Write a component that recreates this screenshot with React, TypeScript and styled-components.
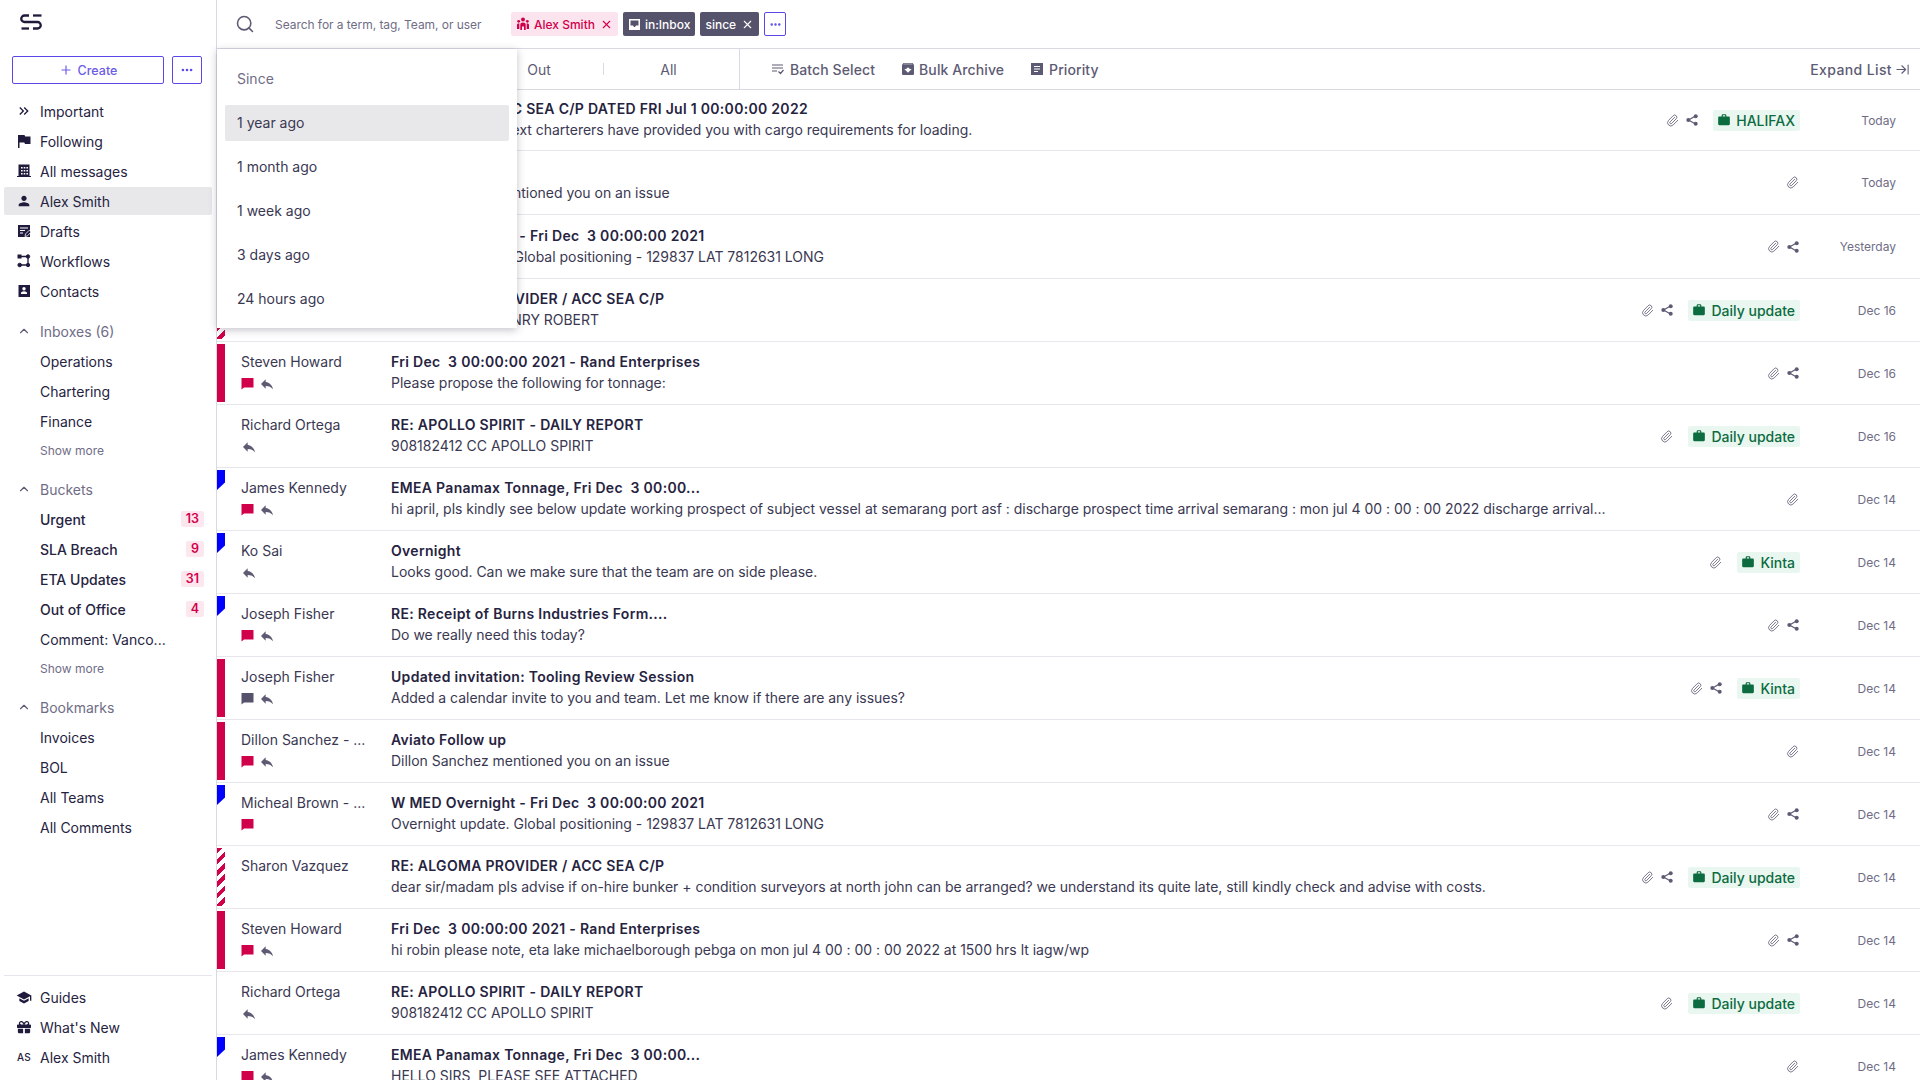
import React from "react";
import styled, { createGlobalStyle } from "styled-components";
import { Search, X, Plus, MoreHorizontal, ChevronUp, Paperclip, ArrowRightToLine } from "lucide-react";
import { MdKeyboardDoubleArrowRight, MdPerson, MdSchool, MdReply, MdWork, MdArchive } from "react-icons/md";
import { FaGift } from "react-icons/fa";

const INK = "#26233f";
const GREY = "#5d5b74";
const CRIMSON = "#d1004b";

const Global = createGlobalStyle`
  html, body { margin: 0; padding: 0; height: 100%; background: #fff; overflow: hidden; }
  body { font-family: Inter, "Liberation Sans", sans-serif; color: ${INK}; font-size: 14px; }
  * { box-sizing: border-box; }
`;

const Shell = styled.div`
  display: flex;
  width: 1920px;
  height: 1080px;
  overflow: hidden;
`;

const Sidebar = styled.aside`
  width: 217px;
  flex: none;
  display: flex;
  flex-direction: column;
  border-right: 1px solid #d9d9e4;
`;

const LogoBar = styled.div`
  height: 56px;
  padding: 13px 0 0 20px;
  flex: none;
`;

const CreateRow = styled.div`
  display: flex;
  gap: 8px;
  padding: 0 14px 0 12px;
  height: 28px;
  flex: none;
`;

const CreateButton = styled.button`
  flex: 1;
  display: flex;
  align-items: center;
  justify-content: center;
  gap: 5px;
  border: 1px solid #5a49e8;
  border-radius: 2px;
  background: #fff;
  color: #6c5ce7;
  font: 500 12.5px Inter, sans-serif;
  padding: 0;
`;

const MoreButton = styled.button<{ $w?: number }>`
  width: ${(p) => p.$w ?? 30}px;
  flex: none;
  display: flex;
  align-items: center;
  justify-content: center;
  border: 1px solid #5a49e8;
  border-radius: 2px;
  background: #fff;
  color: #5a49e8;
  padding: 0;
`;

const NavGroup = styled.nav<{ $top?: number }>`
  display: flex;
  flex-direction: column;
  gap: 2px;
  padding: 0 4px;
  margin-top: ${(p) => p.$top ?? 12}px;
  flex: none;
`;

const NavItem = styled.div<{ $active?: boolean; $strong?: boolean; $muted?: boolean }>`
  height: 28px;
  display: flex;
  align-items: center;
  gap: 8px;
  padding: 0 8px 0 12px;
  border-radius: 2px;
  background: ${(p) => (p.$active ? "#e8e8eb" : "transparent")};
  color: ${(p) => (p.$muted ? "#6f6d86" : INK)};
  font-size: 14px;
  font-weight: ${(p) => (p.$strong ? 500 : 400)};
  white-space: nowrap;
`;

const NavIcon = styled.span`
  width: 16px;
  height: 16px;
  flex: none;
  display: flex;
  align-items: center;
  justify-content: center;
  color: #1f1b3d;
`;

const Initials = styled.span`
  font-size: 10px;
  font-weight: 500;
  letter-spacing: 0.2px;
  color: #1f1b3d;
`;

const NavLabel = styled.span`
  flex: 1;
`;

const Count = styled.span`
  height: 16px;
  padding: 0 5px;
  border-radius: 2px;
  background: #fce7ef;
  color: ${CRIMSON};
  font-size: 12.5px;
  font-weight: 600;
  line-height: 16px;
`;

const ShowMore = styled.div`
  height: 26px;
  display: flex;
  align-items: center;
  padding-left: 36px;
  color: #6f6d86;
  font-size: 12px;
`;

const Footer = styled.div`
  margin-top: auto;
  margin-left: 4px;
  margin-right: 4px;
  padding-top: 7px;
  padding-bottom: 9px;
  border-top: 1px solid #e6e6ec;
  display: flex;
  flex-direction: column;
  gap: 2px;
  flex: none;
`;

const Main = styled.main`
  position: relative;
  flex: 1;
  min-width: 0;
  display: flex;
  flex-direction: column;
`;

const TopBar = styled.header`
  height: 49px;
  flex: none;
  display: flex;
  align-items: center;
  padding-left: 18px;
  border-bottom: 1px solid #d9d9e4;
`;

const Placeholder = styled.span`
  width: 236px;
  margin-left: 20px;
  flex: none;
  color: #6f6d86;
  font-size: 12px;
  letter-spacing: -0.05px;
  white-space: nowrap;
`;

const Chips = styled.div`
  display: flex;
  align-items: stretch;
  gap: 5px;
  height: 24px;
`;

const Chip = styled.span<{ $tone: "pink" | "slate" }>`
  height: 24px;
  display: flex;
  align-items: center;
  gap: 4px;
  padding: 0 5px;
  border-radius: 2px;
  font-size: 12px;
  font-weight: 500;
  background: ${(p) => (p.$tone === "pink" ? "#fce4ee" : "#55526b")};
  color: ${(p) => (p.$tone === "pink" ? CRIMSON : "#fff")};
`;

const ChipClose = styled(X)`
  margin-left: 1px;
`;

const Toolbar = styled.div`
  height: 41px;
  flex: none;
  display: flex;
  align-items: stretch;
  border-bottom: 1px solid #d9d9e4;
  color: ${GREY};
`;

const Tabs = styled.div`
  width: 523px;
  flex: none;
  display: flex;
  align-items: center;
  border-right: 1px solid #d9d9e4;
`;

const Tab = styled.div<{ $sep?: boolean }>`
  width: 129px;
  height: 12px;
  flex: none;
  display: flex;
  align-items: center;
  justify-content: center;
  font-size: 14px;
  border-right: ${(p) => (p.$sep ? "1px solid #d9d9e4" : "none")};
`;

const Actions = styled.div`
  flex: 1;
  display: flex;
  align-items: center;
  gap: 26px;
  padding: 0 10px 0 31px;
`;

const Action = styled.div<{ $gap?: number }>`
  display: flex;
  align-items: center;
  gap: ${(p) => p.$gap ?? 6}px;
  font-size: 14px;
  font-weight: 500;
  letter-spacing: 0.1px;
  white-space: nowrap;
`;

const ArchiveAction = styled(Action)`
  margin-left: -1px;
  margin-right: 1px;
`;

const ExpandAction = styled(Action)`
  margin-left: auto;
  letter-spacing: 0.38px;
`;

const List = styled.div`
  flex: 1;
  overflow: hidden;
`;

const Row = styled.div<{ $h: number }>`
  height: ${(p) => p.$h}px;
  display: flex;
  align-items: center;
  padding-right: 24px;
  border-bottom: 1px solid #e6e6ec;
`;

const FlagSlot = styled.div`
  width: 8px;
  flex: none;
  align-self: stretch;
  padding: 2px 0;
  display: flex;
`;

const FlagMark = styled.div<{ $kind: "red" | "blue" | "stripe" | "none" }>`
  width: 8px;
  height: ${(p) => (p.$kind === "blue" ? "20px" : "100%")};
  clip-path: ${(p) => (p.$kind === "blue" ? "polygon(0 0, 100% 0, 100% 62%, 0 100%)" : "none")};
  background: ${(p) =>
    p.$kind === "red"
      ? CRIMSON
      : p.$kind === "blue"
      ? "#0000ff"
      : p.$kind === "stripe"
      ? `repeating-linear-gradient(135deg, ${CRIMSON} 0 4px, #fff 4px 8px)`
      : "transparent"};
`;

const SenderCol = styled.div`
  width: 150px;
  margin-left: 16px;
  margin-bottom: 2px;
  flex: none;
  display: flex;
  flex-direction: column;
`;

const Line = styled.div`
  height: 21px;
  line-height: 21px;
  font-size: 14px;
  white-space: pre;
`;

const Sender = styled(Line)`
  color: #3a3852;
`;

const Marks = styled.div`
  height: 21px;
  padding-top: 2px;
  display: flex;
  align-items: center;
  gap: 5px;
  color: ${GREY};
`;

const MsgCol = styled.div`
  flex: 1;
  min-width: 0;
  margin-bottom: 2px;
  display: flex;
  flex-direction: column;
`;

const Subject = styled(Line)`
  font-weight: 600;
  letter-spacing: 0.3px;
  color: ${INK};
`;

const Preview = styled(Line)`
  letter-spacing: -0.02px;
  color: #3a3852;
`;

const RowIcons = styled.div`
  display: flex;
  align-items: center;
  gap: 7px;
  margin-right: 1px;
  flex: none;
  color: ${GREY};
`;

const Team = styled.span`
  height: 21px;
  margin-left: 14px;
  padding: 0 5px 0 4px;
  display: flex;
  align-items: center;
  gap: 5px;
  border-radius: 2px;
  background: #e9f7f0;
  color: #0c6b3f;
  font-size: 14px;
  font-weight: 500;
  flex: none;
`;

const When = styled.span`
  width: 96px;
  flex: none;
  text-align: right;
  font-size: 12px;
  color: #6f6d86;
`;

const Menu = styled.div`
  position: absolute;
  top: 49px;
  left: 0;
  width: 300px;
  height: 279px;
  padding: 8px 8px 0;
  background: #fff;
  box-shadow: 0 2px 8px rgba(40, 38, 70, 0.28);
`;

const MenuTitle = styled.div`
  height: 48px;
  padding: 0 0 5px 12px;
  display: flex;
  align-items: center;
  color: #6f6d86;
  font-size: 14px;
`;

const MenuItem = styled.div<{ $active?: boolean }>`
  height: 36px;
  margin-bottom: 8px;
  padding: 0 0 1px 12px;
  display: flex;
  align-items: center;
  border-radius: 2px;
  font-size: 14px;
  color: #3a3852;
  background: ${(p) => (p.$active ? "#e8e8eb" : "transparent")};
`;

const Logo = () => (
  <svg width="23" height="18" viewBox="0 0 23 18" fill="none" stroke="#1f1b3d" strokeWidth="2.3">
    <path d="M9 2.500H4.500a3.200 3.200 0 0 0 0 6.500h13a3.200 3.200 0 0 1 0 6.500H13" />
    <path d="M13 2.500h8.500" />
    <path d="M1.500 15.500H9" />
  </svg>
);

const FlagIcon = () => (
  <svg width="14" height="14" viewBox="0 0 14 14" fill="currentColor">
    <path d="M1 1h6.500l.7 1.500H13.500v7.500H8l-.7-1.500H2.500V14H1z" />
  </svg>
);

const Building = () => (
  <svg width="16" height="16" viewBox="0 0 16 16" fill="currentColor">
    <path fillRule="evenodd" d="M2.500 1.500h11V13H15v1H1v-1h1.500zM5 4v1.600h1.600V4zm2.700 0v1.600h1.600V4zm2.700 0v1.600H12V4zM5 7v1.600h1.600V7zm2.700 0v1.600h1.600V7zm2.700 0v1.600H12V7zM5 10v1.600h1.600V10zm2.700 0v1.600h1.600V10zm2.700 0v1.600H12V10z" />
  </svg>
);

const Draft = () => (
  <svg width="14" height="14" viewBox="0 0 14 14" fill="currentColor">
    <path d="M1 1h12v12H1z" />
    <path d="M3 4h8M3 6.500h5M3 9h3" stroke="#fff" strokeWidth="1" />
    <path d="M8 12.500l.5-2.500 3.700-3.700 1.800 1.800-3.600 3.800z" stroke="#fff" strokeWidth=".8" />
  </svg>
);

const Flow = () => (
  <svg width="14" height="14" viewBox="0 0 14 14" fill="currentColor" stroke="currentColor">
    <path d="M3 2.500h8v8.500H3" fill="none" strokeWidth="1.300" />
    <rect x="1" y="1" width="3" height="3" />
    <circle cx="11" cy="2.500" r="1.700" />
    <circle cx="2.700" cy="11" r="1.800" />
    <circle cx="11" cy="11" r="1.700" />
  </svg>
);

const Book = () => (
  <svg width="14" height="14" viewBox="0 0 14 14" fill="currentColor">
    <path fillRule="evenodd" d="M1.500 1h11.500v12H1.500zm5.500 2a1.700 1.700 0 1 0 0 3.400A1.700 1.700 0 0 0 7 3zM4 9v1h6V9c0-1-1.700-1.700-3-1.700S4 8 4 9z" />
  </svg>
);

const Share = () => (
  <svg width="12" height="12" viewBox="0 0 12 12" fill="currentColor" stroke="currentColor">
    <path d="M9.500 2L2.500 6l7 4" fill="none" strokeWidth="1.200" />
    <circle cx="9.700" cy="2.300" r="2" stroke="none" />
    <circle cx="2.300" cy="6" r="2" stroke="none" />
    <circle cx="9.700" cy="9.700" r="2" stroke="none" />
  </svg>
);

const Bubble = ({ color }: { color: string }) => (
  <svg width="13" height="13" viewBox="0 0 13 13" fill={color}>
    <path d="M0.500 1h12v9.500H3L0.500 12.500z" />
  </svg>
);

const BatchIcon = () => (
  <svg width="13" height="12" viewBox="0 0 13 12" fill="none" stroke="currentColor" strokeWidth="1.200">
    <path d="M1 2h11M1 5h11M1 8h5M7.500 8.500l2 2 3-3.500" />
  </svg>
);

const PriorityIcon = () => (
  <svg width="12" height="12" viewBox="0 0 12 12" fill="currentColor">
    <path fillRule="evenodd" d="M0 0h12v12H0zM3 3v1h6V3zm0 2.500v1h6v-1zM3 8v1h4V8z" />
  </svg>
);

const InboxIcon = () => (
  <svg width="13" height="13" viewBox="0 0 13 13" fill="currentColor">
    <path fillRule="evenodd" d="M1 1h11v11H1zm1.500 1.500v5h2.500c.3.900 1 1.500 1.500 1.500s1.200-.6 1.500-1.500h2.500v-5z" />
  </svg>
);

const TeamIcon = () => (
  <svg width="14" height="14" viewBox="0 0 14 14" fill="currentColor">
    <circle cx="7" cy="2.500" r="2" />
    <circle cx="2.700" cy="4.300" r="1.400" />
    <circle cx="11.300" cy="4.300" r="1.400" />
    <path d="M4.300 13V7.500c0-1.200 1-2 2.700-2s2.700.8 2.700 2V13H8V9.500H6V13z" />
    <path d="M1 12V8c0-1 .6-1.800 2.300-1.800V12zM13 12V8c0-1-.6-1.800-2.300-1.800V12z" />
  </svg>
);

const Clip = () => <Paperclip size={13} strokeWidth={1.5} />;

type Flag = "red" | "blue" | "stripe" | "none";
type Msg = {
  h: number;
  flag: Flag;
  from: string;
  marks: string;
  subject: string;
  preview: string;
  share?: boolean;
  team?: string;
  when: string;
};

const messages: Msg[] = [
  { h: 61, flag: "red", from: "Steven Howard", marks: "r", subject: "A PROVIDER / ACC SEA C/P DATED FRI Jul 1 00:00:00 2022", preview: "Good morning  - next charterers have provided you with cargo requirements for loading.", share: true, team: "HALIFAX", when: "Today" },
  { h: 64, flag: "none", from: "Dillon Sanchez", marks: "r", subject: "Aviato Follow up", preview: "Dillon Sanchez mentioned you on an issue", when: "Today" },
  { h: 64, flag: "none", from: "Micheal Brown", marks: "r", subject: "W MED Overnight - Fri Dec  3 00:00:00 2021", preview: "Overnight update. Global positioning - 129837 LAT 7812631 LONG", share: true, when: "Yesterday" },
  { h: 63, flag: "stripe", from: "Sharon Vazquez", marks: "", subject: "RE: ALGOMA PROVIDER / ACC SEA C/P", preview: "Dear Sir, CAPT HENRY ROBERT", share: true, team: "Daily update", when: "Dec 16" },
  { h: 63, flag: "red", from: "Steven Howard", marks: "cr", subject: "Fri Dec  3 00:00:00 2021 - Rand Enterprises", preview: "Please propose the following for tonnage:", share: true, when: "Dec 16" },
  { h: 63, flag: "none", from: "Richard Ortega", marks: "r", subject: "RE: APOLLO SPIRIT - DAILY REPORT", preview: "908182412 CC APOLLO SPIRIT", team: "Daily update", when: "Dec 16" },
  { h: 63, flag: "blue", from: "James Kennedy", marks: "cr", subject: "EMEA Panamax Tonnage, Fri Dec  3 00:00...", preview: "hi april, pls kindly see below update working prospect of subject vessel at semarang port asf : discharge prospect time arrival semarang : mon jul 4 00 : 00 : 00 2022 discharge arrival...", when: "Dec 14" },
  { h: 63, flag: "blue", from: "Ko Sai", marks: "r", subject: "Overnight", preview: "Looks good. Can we make sure that the team are on side please.", team: "Kinta", when: "Dec 14" },
  { h: 63, flag: "blue", from: "Joseph Fisher", marks: "cr", subject: "RE: Receipt of Burns Industries Form....", preview: "Do we really need this today?", share: true, when: "Dec 14" },
  { h: 63, flag: "red", from: "Joseph Fisher", marks: "gr", subject: "Updated invitation: Tooling Review Session", preview: "Added a calendar invite to you and team. Let me know if there are any issues?", share: true, team: "Kinta", when: "Dec 14" },
  { h: 63, flag: "red", from: "Dillon Sanchez - ...", marks: "cr", subject: "Aviato Follow up", preview: "Dillon Sanchez mentioned you on an issue", when: "Dec 14" },
  { h: 63, flag: "blue", from: "Micheal Brown - ...", marks: "c", subject: "W MED Overnight - Fri Dec  3 00:00:00 2021", preview: "Overnight update. Global positioning - 129837 LAT 7812631 LONG", share: true, when: "Dec 14" },
  { h: 63, flag: "stripe", from: "Sharon Vazquez", marks: "", subject: "RE: ALGOMA PROVIDER / ACC SEA C/P", preview: "dear sir/madam pls advise if on-hire bunker + condition surveyors at north john can be arranged? we understand its quite late, still kindly check and advise with costs.", share: true, team: "Daily update", when: "Dec 14" },
  { h: 63, flag: "red", from: "Steven Howard", marks: "cr", subject: "Fri Dec  3 00:00:00 2021 - Rand Enterprises", preview: "hi robin please note, eta lake michaelborough pebga on mon jul 4 00 : 00 : 00 2022 at 1500 hrs lt iagw/wp", share: true, when: "Dec 14" },
  { h: 63, flag: "none", from: "Richard Ortega", marks: "r", subject: "RE: APOLLO SPIRIT - DAILY REPORT", preview: "908182412 CC APOLLO SPIRIT", team: "Daily update", when: "Dec 14" },
  { h: 63, flag: "blue", from: "James Kennedy", marks: "cr", subject: "EMEA Panamax Tonnage, Fri Dec  3 00:00...", preview: "HELLO SIRS, PLEASE SEE ATTACHED", when: "Dec 14" },
];

const primaryNav: [React.ReactNode, string][] = [
  [<MdKeyboardDoubleArrowRight size={20} />, "Important"],
  [<FlagIcon />, "Following"],
  [<Building />, "All messages"],
  [<MdPerson size={20} />, "Alex Smith"],
  [<Draft />, "Drafts"],
  [<Flow />, "Workflows"],
  [<Book />, "Contacts"],
];

const Section = ({ title }: { title: string }) => (
  <NavItem $muted>
    <NavIcon>
      <ChevronUp size={14} color="#5d5b74" />
    </NavIcon>
    <NavLabel>{title}</NavLabel>
  </NavItem>
);

const SubItem = ({ label, count, strong }: { label: string; count?: number; strong?: boolean }) => (
  <NavItem $strong={strong}>
    <NavIcon />
    <NavLabel>{label}</NavLabel>
    {count !== undefined && <Count>{count}</Count>}
  </NavItem>
);

export default function App() {
  return (
    <>
      <Global />
      <Shell>
        <Sidebar>
          <LogoBar>
            <Logo />
          </LogoBar>
          <CreateRow>
            <CreateButton>
              <Plus size={14} />
              Create
            </CreateButton>
            <MoreButton>
              <MoreHorizontal size={14} strokeWidth={2.5} />
            </MoreButton>
          </CreateRow>
          <NavGroup $top={13}>
            {primaryNav.map(([icon, label]) => (
              <NavItem key={label} $active={label === "Alex Smith"}>
                <NavIcon>{icon}</NavIcon>
                <NavLabel>{label}</NavLabel>
              </NavItem>
            ))}
          </NavGroup>
          <NavGroup>
            <Section title="Inboxes (6)" />
            <SubItem label="Operations" />
            <SubItem label="Chartering" />
            <SubItem label="Finance" />
            <ShowMore>Show more</ShowMore>
          </NavGroup>
          <NavGroup>
            <Section title="Buckets" />
            <SubItem label="Urgent" count={13} strong />
            <SubItem label="SLA Breach" count={9} strong />
            <SubItem label="ETA Updates" count={31} strong />
            <SubItem label="Out of Office" count={4} strong />
            <SubItem label="Comment: Vanco..." />
            <ShowMore>Show more</ShowMore>
          </NavGroup>
          <NavGroup>
            <Section title="Bookmarks" />
            <SubItem label="Invoices" />
            <SubItem label="BOL" />
            <SubItem label="All Teams" />
            <SubItem label="All Comments" />
          </NavGroup>
          <Footer>
            <NavItem>
              <NavIcon>
                <MdSchool size={19} />
              </NavIcon>
              Guides
            </NavItem>
            <NavItem>
              <NavIcon>
                <FaGift size={14} />
              </NavIcon>
              What's New
            </NavItem>
            <NavItem>
              <NavIcon>
                <Initials>AS</Initials>
              </NavIcon>
              Alex Smith
            </NavItem>
          </Footer>
        </Sidebar>
        <Main>
          <TopBar>
            <Search size={20} color="#5d5b74" strokeWidth={1.9} />
            <Placeholder>Search for a term, tag, Team, or user</Placeholder>
            <Chips>
              <Chip $tone="pink">
                <TeamIcon />
                Alex Smith
                <ChipClose size={13} />
              </Chip>
              <Chip $tone="slate">
                <InboxIcon />
                in:Inbox
              </Chip>
              <Chip $tone="slate">
                since
                <ChipClose size={13} />
              </Chip>
              <MoreButton $w={22}>
                <MoreHorizontal size={13} strokeWidth={2.5} />
              </MoreButton>
            </Chips>
          </TopBar>
          <Toolbar>
            <Tabs>
              <Tab>Team</Tab>
              <Tab>In</Tab>
              <Tab $sep>Out</Tab>
              <Tab>All</Tab>
            </Tabs>
            <Actions>
              <Action>
                <BatchIcon />
                Batch Select
              </Action>
              <ArchiveAction $gap={3}>
                <MdArchive size={16} />
                Bulk Archive
              </ArchiveAction>
              <Action>
                <PriorityIcon />
                Priority
              </Action>
              <ExpandAction $gap={3}>
                Expand List
                <ArrowRightToLine size={15} strokeWidth={1.7} />
              </ExpandAction>
            </Actions>
          </Toolbar>
          <List>
            {messages.map((m, i) => (
              <Row key={i} $h={m.h}>
                <FlagSlot>
                  <FlagMark $kind={m.flag} />
                </FlagSlot>
                <SenderCol>
                  <Sender>{m.from}</Sender>
                  <Marks>
                    {m.marks.includes("c") && <Bubble color={CRIMSON} />}
                    {m.marks.includes("g") && <Bubble color="#55526b" />}
                    {m.marks.includes("r") && <MdReply size={16} />}
                  </Marks>
                </SenderCol>
                <MsgCol>
                  <Subject>{m.subject}</Subject>
                  <Preview>{m.preview}</Preview>
                </MsgCol>
                <RowIcons>
                  <Clip />
                  {m.share && <Share />}
                </RowIcons>
                {m.team && (
                  <Team>
                    <MdWork size={14} />
                    {m.team}
                  </Team>
                )}
                <When>{m.when}</When>
              </Row>
            ))}
          </List>
          <Menu>
            <MenuTitle>Since</MenuTitle>
            <MenuItem $active>1 year ago</MenuItem>
            <MenuItem>1 month ago</MenuItem>
            <MenuItem>1 week ago</MenuItem>
            <MenuItem>3 days ago</MenuItem>
            <MenuItem>24 hours ago</MenuItem>
          </Menu>
        </Main>
      </Shell>
    </>
  );
}
